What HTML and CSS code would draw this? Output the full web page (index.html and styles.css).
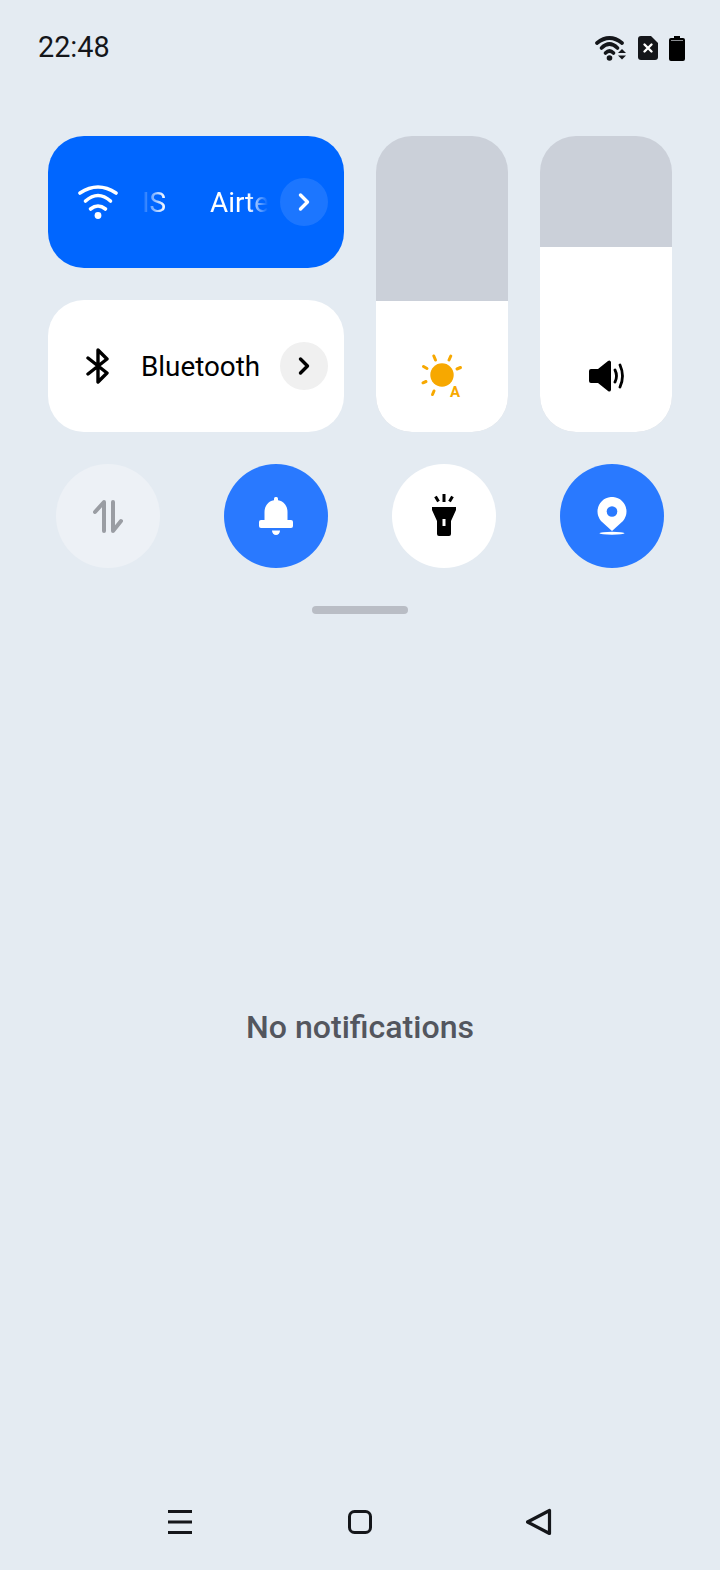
FILE: index.html
```html
<!DOCTYPE html>
<html lang="en">
<head>
  <meta charset="UTF-8" />
  <title>Quick Settings</title>
  <link rel="stylesheet" href="styles.css">
</head>
<body>
  <div class="status-bar">
    <span class="clock">22:48</span>
    <div class="status-icons">
      <svg class="status-wifi" width="31" height="26" viewBox="0 0 31 26" fill="none" stroke="#14161a" stroke-width="3.7" stroke-linecap="round">
        <path d="M2 8 Q14.500 -2 27 8" />
        <path d="M6.500 13 Q14.500 5 22.500 13" />
        <path d="M10.500 18 Q14.500 14 18.500 18" />
        <circle cx="14.500" cy="23" r="2.8" fill="#14161a" stroke="none" />
        <path d="M23 18 L27 14 L31 18 Z M23 20.500 H31 L27 24.500 Z" fill="#14161a" stroke="none" />
      </svg>
      <svg width="20" height="24" viewBox="0 0 20 24">
        <path d="M3 0 H13 L20 7 V21 A3 3 0 0 1 17 24 H3 A3 3 0 0 1 0 21 V3 A3 3 0 0 1 3 0 Z" fill="#14161a" />
        <path d="M6.500 8.500 L13.500 15.500 M13.500 8.500 L6.500 15.500" stroke="#fff" stroke-width="2.4" stroke-linecap="round" />
      </svg>
      <svg width="16" height="25" viewBox="0 0 16 25">
        <path d="M5 0 H11 V2 H14 A2 2 0 0 1 16 4 V23 A2 2 0 0 1 14 25 H2 A2 2 0 0 1 0 23 V4 A2 2 0 0 1 2 2 H5 Z" fill="#000" />
        <rect x="2" y="4" width="12" height="1" fill="#8b8d91" />
      </svg>
    </div>
  </div>

  <div class="panel">
    <div class="top-grid">
      <div class="tiles">
        <div class="tile tile-on">
          <svg class="tile-icon" width="40" height="34" viewBox="0 0 40 34" fill="none" stroke="#fff" stroke-width="3.6" stroke-linecap="round">
            <path d="M2 8 Q20 -4 38 8" />
            <path d="M7.500 16 Q20 5 32.500 16" />
            <path d="M12.500 24 Q20 18 27.500 24" />
            <circle cx="20" cy="30.500" r="3.4" fill="#fff" stroke="none" />
          </svg>
          <div class="tile-marquee">
            <span>IS</span>
            <span>Airtel</span>
          </div>
          <div class="tile-more more-on">
            <svg width="14" height="20" viewBox="0 0 14 20" fill="none" stroke="#fff" stroke-width="3.4" stroke-linecap="round" stroke-linejoin="round"><path d="M3.500 3 L10.500 10 L3.500 17" /></svg>
          </div>
        </div>
        <div class="tile">
          <svg class="tile-icon" width="40" height="36" viewBox="0 0 40 36" fill="none" stroke="#000" stroke-width="3.4" stroke-linejoin="round" stroke-linecap="round">
            <path d="M10 10 L29 25 L20 34 V2 L29 11 L10 26" />
          </svg>
          <span class="tile-label">Bluetooth</span>
          <div class="tile-more">
            <svg width="14" height="20" viewBox="0 0 14 20" fill="none" stroke="#000" stroke-width="3.4" stroke-linecap="round" stroke-linejoin="round"><path d="M3.500 3 L10.500 10 L3.500 17" /></svg>
          </div>
        </div>
      </div>

      <div class="slider">
        <div class="slider-fill fill-brightness" style="height: 131px">
          <svg width="44" height="46" viewBox="-2 0 44 46" fill="none" stroke="#f7a800" stroke-width="3" stroke-linecap="round">
            <circle cx="20" cy="21" r="11.7" fill="#f7a800" stroke="none" />
            <path d="M13.500 6 L11.800 2 M27 6 L28.800 2 M5 14.500 L1.500 12.500 M35 15 L38.500 13.500 M4 27.500 L1 28.800 M12 37 L10.500 40.500" />
            <text class="sun-auto" x="28" y="43">A</text>
          </svg>
        </div>
      </div>
      <div class="slider">
        <div class="slider-fill" style="height: 185px">
          <svg width="36" height="32" viewBox="-1 0 36 32">
            <path d="M2 9 H9 L19 1 A2 2 0 0 1 22 2 V30 A2 2 0 0 1 19 31 L9 23 H2 A2 2 0 0 1 0 21 V11 A2 2 0 0 1 2 9 Z" fill="#000" />
            <path d="M26 10 Q29 16 26 22 M31 5 Q36 16 31 27" fill="none" stroke="#000" stroke-width="2.8" stroke-linecap="round" />
          </svg>
        </div>
      </div>
    </div>

    <div class="round-row">
      <div class="round round-off">
        <svg width="30" height="33" viewBox="0 0 30 33" fill="none" stroke="#9a9da3" stroke-width="4" stroke-linecap="round" stroke-linejoin="round">
          <path d="M11 31 V2 L2 12" />
          <path d="M20 2 V31 L28 21" />
        </svg>
      </div>
      <div class="round round-on">
        <svg width="34" height="38" viewBox="0 0 34 38" fill="#fff">
          <rect x="15" y="0" width="4" height="5" rx="1.500" />
          <path d="M5.500 24 V15 C5.500 8 10.500 3 17 3 C23.500 3 28.500 8 28.500 15 V24 Z" />
          <rect x="0" y="23" width="34" height="8" rx="2" />
          <path d="M13 33.500 H21 A4 4.500 0 0 1 13 33.500 Z" />
        </svg>
      </div>
      <div class="round">
        <svg width="24" height="44" viewBox="0 0 24 44" fill="#000">
          <path d="M12 0 V8 M3.500 2.500 L6.500 7.500 M20.500 2.500 L17.500 7.500" stroke="#000" stroke-width="3" fill="none" />
          <path d="M0 13 H24 V16 L19 27 V40 A2 2 0 0 1 17 42 H7 A2 2 0 0 1 5 40 V27 L0 16 Z" />
          <rect x="10.500" y="25" width="3" height="7" fill="#fff" />
        </svg>
      </div>
      <div class="round round-on">
        <svg width="30" height="38" viewBox="0 0 30 38">
          <path d="M15 34 L4 23.900 A14.500 14.500 0 1 1 26 23.900 Z" fill="#fff" />
          <circle cx="15" cy="14.500" r="5.300" fill="#2979ff" />
          <ellipse cx="15" cy="36.300" rx="12.500" ry="1.500" fill="#fff" />
        </svg>
      </div>
    </div>

    <div class="grabber"></div>
  </div>

  <div class="empty">No notifications</div>

  <div class="nav-bar">
    <svg width="28" height="28" viewBox="0 0 28 28" stroke="#14161a" stroke-width="3">
      <path d="M2 3.500 H26 M2 14 H26 M2 24.500 H26" />
    </svg>
    <svg width="28" height="28" viewBox="0 0 28 28" fill="none" stroke="#14161a" stroke-width="3">
      <rect x="3.500" y="3.500" width="21" height="21" rx="5" />
    </svg>
    <svg width="28" height="28" viewBox="0 0 28 28" fill="none" stroke="#14161a" stroke-width="3.2" stroke-linejoin="round">
      <path d="M23.500 2.500 V25.500 L1.500 14 Z" />
    </svg>
  </div>
</body>
</html>
```

FILE: styles.css
```css
html, body {
  height: 100%;
}
body {
  font-family: Roboto, 'Noto Sans', sans-serif;
  background: #e4ebf2;
  margin: 0;
  color: #000;
  display: flex;
  flex-direction: column;
}
.status-bar {
  height: 96px;
  flex: none;
  padding: 0 35px 0 38px;
  display: flex;
  align-items: center;
  justify-content: space-between;
}
.clock {
  font-size: 28.8px;
  color: #14161a;
  margin-bottom: 2px;
}
.status-icons {
  display: flex;
  align-items: center;
  gap: 11px;
}
.status-wifi {
  margin-right: 1px;
}
.panel {
  flex: none;
  margin-top: 40px;
  padding: 0 48px;
}
.top-grid {
  display: grid;
  grid-template-columns: 296px 132px 132px;
  gap: 32px;
}
.tiles {
  display: flex;
  flex-direction: column;
  gap: 32px;
}
.tile {
  height: 132px;
  background: white;
  border-radius: 36px;
  padding: 0 16px 0 30px;
  display: flex;
  align-items: center;
  font-size: 27.8px;
}
.tile-on {
  background: #0066ff;
  color: white;
}
.tile-icon {
  flex: none;
  margin-right: 23px;
}
.tile-marquee {
  width: 127px;
  display: flex;
  gap: 44px;
  overflow: hidden;
  white-space: nowrap;
  padding-left: 1px;
  box-sizing: border-box;
  -webkit-mask-image: linear-gradient(90deg, transparent, #000 24px, #000 107px, transparent 127px);
  mask-image: linear-gradient(90deg, transparent, #000 24px, #000 107px, transparent 127px);
}
.tile-label {
  white-space: nowrap;
}
.tile-more {
  width: 48px;
  height: 48px;
  flex: none;
  margin-left: auto;
  border-radius: 50%;
  background: #f0f0f0;
  display: flex;
  align-items: center;
  justify-content: center;
}
.more-on {
  background: rgba(255,255,255,0.11);
}
.slider {
  height: 296px;
  border-radius: 36px;
  background: #cbd0d9;
  overflow: hidden;
  display: flex;
  flex-direction: column;
  justify-content: flex-end;
}
.slider-fill {
  background: white;
  display: flex;
  justify-content: center;
  align-items: flex-end;
  padding-bottom: 40px;
  box-sizing: border-box;
}
.fill-brightness {
  padding-bottom: 32px;
}
.slider-fill svg {
  display: block;
}
.sun-auto {
  font-family: Roboto, sans-serif;
  font-size: 15px;
  font-weight: 700;
  fill: #f7a800;
  stroke: none;
}
.round-row {
  margin-top: 32px;
  padding: 0 8px;
  display: flex;
  justify-content: space-between;
}
.round {
  width: 104px;
  height: 104px;
  border-radius: 50%;
  background: white;
  display: flex;
  align-items: center;
  justify-content: center;
}
.round-on {
  background: #2979ff;
}
.round-off {
  background: #edf1f6;
}
.grabber {
  width: 96px;
  height: 8px;
  margin: 38px auto 0;
  border-radius: 4px;
  background: #b9bdc5;
}
.empty {
  flex: 1;
  display: flex;
  align-items: center;
  justify-content: center;
  font-size: 32.1px;
  font-weight: 500;
  color: #53565e;
  margin-top: -1px;
}
.nav-bar {
  flex: none;
  height: 129px;
  padding-top: 67px;
  box-sizing: border-box;
  display: flex;
  justify-content: center;
  gap: 152px;
}
```
